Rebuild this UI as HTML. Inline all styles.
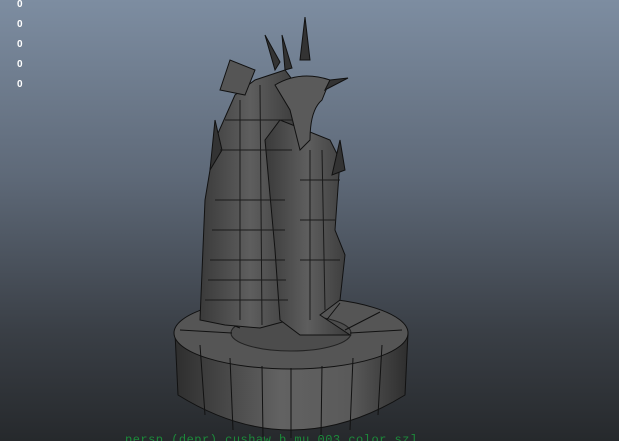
<!DOCTYPE html>
<html><head><style>
html,body{margin:0;padding:0;width:619px;height:441px;overflow:hidden}
body{background:linear-gradient(to bottom,#7d8da1 0%,#5e6978 40%,#3a3f46 75%,#26292c 100%);font-family:"Liberation Sans",sans-serif;position:relative}
.n{position:absolute;left:17px;color:#fff;font-size:10px;font-weight:bold}
.t{position:absolute;left:125px;top:433px;color:#1c8a3a;font-family:"Liberation Mono",monospace;font-size:12px;letter-spacing:0.5px}
</style></head><body>
<div class="n" style="top:-1px">0</div>
<div class="n" style="top:19px">0</div>
<div class="n" style="top:39px">0</div>
<div class="n" style="top:59px">0</div>
<div class="n" style="top:79px">0</div>
<svg width="619" height="441" style="position:absolute;left:0;top:0">
<defs>
<linearGradient id="side" x1="0" x2="1">
<stop offset="0" stop-color="#2e2e2e"/><stop offset="0.45" stop-color="#626262"/><stop offset="0.75" stop-color="#5a5a5a"/><stop offset="1" stop-color="#2e2e2e"/>
</linearGradient>
<linearGradient id="fig" x1="0" x2="1">
<stop offset="0" stop-color="#3a3a3a"/><stop offset="0.5" stop-color="#5e5e5e"/><stop offset="1" stop-color="#3a3a3a"/>
</linearGradient>
</defs>
<g stroke="#111" stroke-width="1">
<path d="M175 333 L178 395 Q291 465 405 395 L408 333 Z" fill="url(#side)"/>
<ellipse cx="291" cy="333" rx="117" ry="36" fill="#555"/>
<ellipse cx="291" cy="333" rx="60" ry="18" fill="#4c4c4c" stroke="#222"/>
<path d="M200 345 L205 415 M230 358 L233 430 M262 366 L263 437 M291 368 L291 438 M322 366 L321 437 M353 358 L350 430 M382 345 L378 415 M180 330 L232 333 M200 312 L240 328 M250 302 L270 324 M340 303 L325 322 M380 312 L345 330 M402 330 L350 333" fill="none"/>
<path d="M200 320 L205 200 L215 140 L235 95 L255 80 L285 70 L300 90 L295 150 L285 230 L290 320 L260 328 L225 325 Z" fill="url(#fig)"/>
<path d="M220 90 L230 60 L255 70 L245 95 Z" fill="#555"/>
<path d="M265 140 L280 120 L330 140 L340 160 L335 230 L345 255 L340 300 L320 315 L350 335 L300 335 L280 320 L275 250 Z" fill="url(#fig)"/>
<path d="M275 85 Q300 70 330 80 L322 100 Q310 110 310 140 L300 150 L290 110 Z" fill="#5a5a5a"/>
<path d="M305 17 L300 60 L310 60 Z M282 35 L285 70 L292 68 Z M265 35 L275 70 L280 62 Z M330 80 L348 78 L325 90 Z M215 120 L210 170 L222 150 Z M340 140 L332 175 L345 170 Z" fill="#333"/>
<path d="M215 200 L285 200 M210 260 L285 260 M205 300 L288 300 M220 150 L292 150 M240 100 L240 320 M260 85 L262 325 M300 180 L340 180 M300 220 L335 220 M300 260 L340 260 M212 230 L285 230 M208 280 L286 280 M225 120 L293 120 M310 150 L310 320 M322 150 L325 310" fill="none" stroke="#1a1a1a"/>
</g>
</svg>
<div class="t">persp (depr) cushaw b mu 003 color sz]</div>
</body></html>
